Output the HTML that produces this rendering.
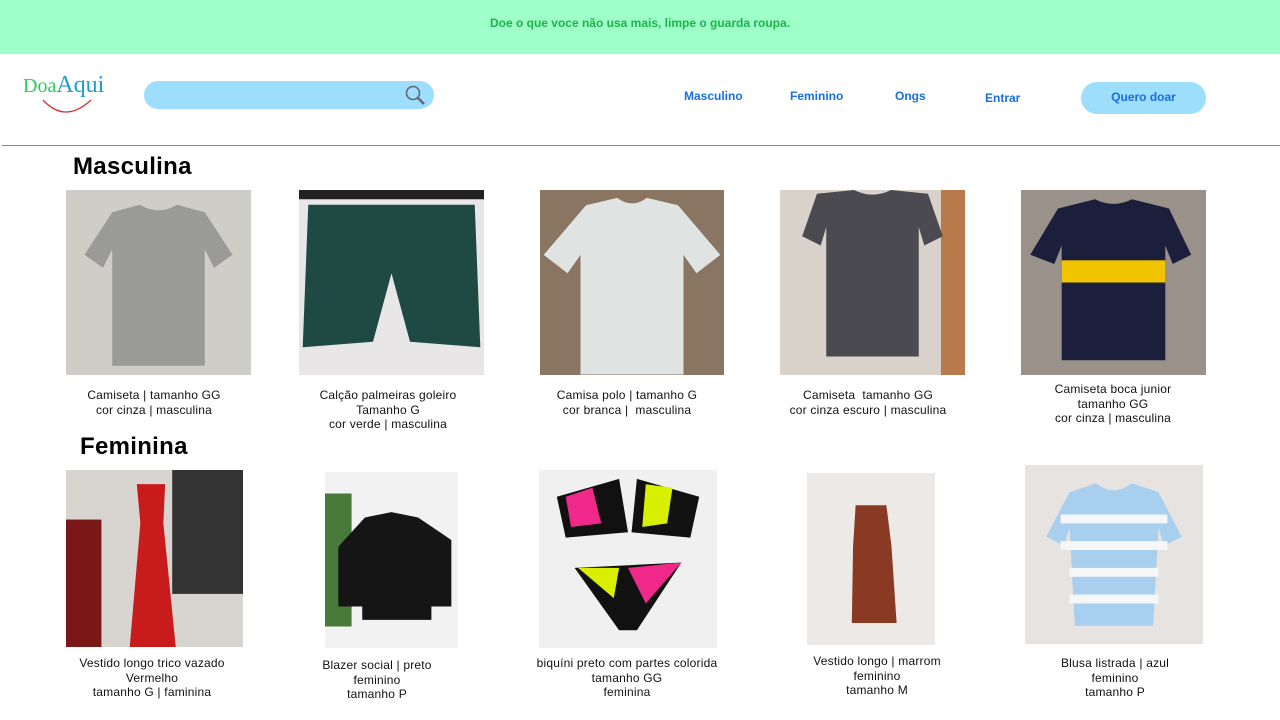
<!DOCTYPE html>
<html><head><meta charset="utf-8"><style>
*{margin:0;padding:0;box-sizing:border-box}
body{width:1280px;height:720px;background:#fff;font-family:"Liberation Sans",sans-serif;position:relative;overflow:hidden}
.top{position:absolute;left:0;top:0;width:1280px;height:54px;background:#9effc9;text-align:center;font-size:12px;font-weight:bold;color:#1db34a;line-height:46px}
.abs{position:absolute}
.nav{position:absolute;font-size:12px;font-weight:bold;color:#1a6fe0}
.hr{position:absolute;left:2px;top:145px;width:1278px;height:1px;background:#888}
h2{position:absolute;font-size:24px;font-weight:bold;color:#000;font-family:"Liberation Sans",sans-serif;letter-spacing:0.3px}
.img{position:absolute;overflow:hidden}
.img svg{position:absolute;left:0;top:0;width:100%;height:100%}
.cap{position:absolute;font-size:12px;line-height:14.7px;text-align:center;color:#111;width:240px;letter-spacing:0.2px}
</style></head><body>
<div class="top">Doe o que voce não usa mais, limpe o guarda roupa.</div>
<div class="abs" style="left:23px;top:72px;font-family:'Liberation Serif',serif;font-size:24px"><span style="color:#2ecc5a;font-size:20px">Doa</span><span style="color:#1a9fd0">Aqui</span></div>
<svg class="abs" style="left:40px;top:98px" width="54" height="18"><path d="M3 2 Q25 26 51 2" stroke="#d33" stroke-width="1.3" fill="none"/></svg>
<div class="abs" style="left:144px;top:81px;width:290px;height:28px;border-radius:14px;background:#9cdefc"></div>
<svg class="abs" style="left:404px;top:84px" width="22" height="22"><circle cx="9" cy="9" r="6.5" stroke="#667" stroke-width="1.6" fill="none"/><path d="M14 14 L20 20" stroke="#667" stroke-width="2.5"/></svg>
<div class="nav" style="left:684px;top:89px">Masculino</div>
<div class="nav" style="left:790px;top:89px">Feminino</div>
<div class="nav" style="left:895px;top:89px">Ongs</div>
<div class="nav" style="left:985px;top:91px">Entrar</div>
<div class="abs" style="left:1081px;top:82px;width:125px;height:32px;border-radius:16px;background:#9cdefc;text-align:center;line-height:31px;font-size:12px;font-weight:bold;color:#1a6fe0">Quero doar</div>
<div class="hr"></div>
<h2 style="left:73px;top:153px">Masculina</h2>
<h2 style="left:80px;top:433px">Feminina</h2>

<div class="img" style="left:66px;top:190px;width:185px;height:185px;background:#cfcdc8"><svg viewBox="0 0 100 100"><path d="M25 12 L40 8 Q50 14 60 8 L75 12 L90 35 L80 42 L75 32 L75 95 L25 95 L25 32 L20 42 L10 35 Z" fill="#9a9a98"/></svg></div>
<div class="img" style="left:299px;top:190px;width:185px;height:185px;background:#e8e6e6"><svg viewBox="0 0 100 100"><rect width="100" height="5" fill="#222"/><path d="M5 8 L95 8 L98 85 L60 82 L50 45 L40 82 L2 85 Z" fill="#1f4a44"/></svg></div>
<div class="img" style="left:540px;top:190px;width:184px;height:185px;background:#8a7462"><svg viewBox="0 0 100 100"><path d="M25 8 L42 4 Q50 10 58 4 L75 8 L98 35 L85 45 L78 35 L78 100 L22 100 L22 35 L15 45 L2 35 Z" fill="#dfe4e2"/></svg></div>
<div class="img" style="left:780px;top:190px;width:185px;height:185px;background:#d8d2ca"><svg viewBox="0 0 100 100"><rect x="87" width="13" height="100" fill="#b87a4a"/><path d="M20 2 L40 0 Q50 5 60 0 L80 2 L88 25 L78 30 L75 20 L75 90 L25 90 L25 20 L22 30 L12 25 Z" fill="#4a4a50"/></svg></div>
<div class="img" style="left:1021px;top:190px;width:185px;height:185px;background:#9a928a"><svg viewBox="0 0 100 100"><path d="M20 10 L40 5 Q50 10 60 5 L80 10 L92 35 L82 40 L78 30 L78 92 L22 92 L22 30 L18 40 L5 35 Z" fill="#1c1f3c"/><rect x="22" y="38" width="56" height="12" fill="#f2c400"/></svg></div>

<div class="cap" style="left:34px;top:388px">Camiseta | tamanho GG<br>cor cinza | masculina</div>
<div class="cap" style="left:268px;top:388px">Calção palmeiras goleiro<br>Tamanho G<br>cor verde | masculina</div>
<div class="cap" style="left:507px;top:388px">Camisa polo | tamanho G<br>cor branca |&nbsp; masculina</div>
<div class="cap" style="left:748px;top:388px">Camiseta&nbsp; tamanho GG<br>cor cinza escuro | masculina</div>
<div class="cap" style="left:993px;top:382px">Camiseta boca junior<br>tamanho GG<br>cor cinza | masculina</div>

<div class="img" style="left:66px;top:470px;width:177px;height:177px;background:#d8d4d0"><svg viewBox="0 0 100 100"><rect x="0" y="28" width="20" height="72" fill="#7a1818"/><rect x="60" y="0" width="40" height="70" fill="#333"/><path d="M40 8 L56 8 L55 30 L62 100 L36 100 L42 30 Z" fill="#c81c1c"/></svg></div>
<div class="img" style="left:325px;top:472px;width:133px;height:176px;background:#f2f2f2"><svg viewBox="0 0 100 100"><rect width="20" height="100" fill="#4a7a3a"/><path d="M30 18 L50 14 L70 18 L95 35 L95 85 L80 85 L80 95 L28 95 L28 85 L10 85 L10 40 Z" fill="#151515"/></svg></div>
<div class="img" style="left:539px;top:470px;width:178px;height:178px;background:#f0f0f0"><svg viewBox="0 0 100 100"><path d="M10 15 L45 5 L50 35 L15 38 Z" fill="#111"/><path d="M15 15 L30 10 L35 30 L18 32 Z" fill="#f0288a"/><path d="M55 5 L90 15 L85 38 L52 35 Z" fill="#111"/><path d="M60 8 L75 10 L72 30 L58 32 Z" fill="#d8f000"/><path d="M20 55 L80 52 L55 90 L45 90 Z" fill="#111"/><path d="M50 55 L80 52 L60 75 Z" fill="#f0288a"/><path d="M22 55 L45 55 L42 72 Z" fill="#d8f000"/></svg></div>
<div class="img" style="left:807px;top:473px;width:128px;height:172px;background:#ece9e6"><svg viewBox="0 0 100 100"><path d="M38 8 L62 8 L66 40 L70 100 L35 100 L36 40 Z" fill="#8a3a22"/></svg></div>
<div class="img" style="left:1025px;top:465px;width:178px;height:179px;background:#e6e3e0"><svg viewBox="0 0 100 100"><path d="M25 15 L40 10 Q50 18 60 10 L75 15 L88 40 L78 45 L75 35 L72 90 L28 90 L25 35 L22 45 L12 40 Z" fill="#a8cfee"/><path d="M20 30 H80 M20 45 H80 M25 60 H75 M25 75 H75" stroke="#f4f6f8" stroke-width="5"/></svg></div>

<div class="cap" style="left:32px;top:656px">Vestido longo trico vazado<br>Vermelho<br>tamanho G | faminina</div>
<div class="cap" style="left:257px;top:658px">Blazer social | preto<br>feminino<br>tamanho P</div>
<div class="cap" style="left:507px;top:656px">biquíni preto com partes colorida<br>tamanho GG<br>feminina</div>
<div class="cap" style="left:757px;top:654px">Vestido longo | marrom<br>feminino<br>tamanho M</div>
<div class="cap" style="left:995px;top:656px">Blusa listrada | azul<br>feminino<br>tamanho P</div>
</body></html>
